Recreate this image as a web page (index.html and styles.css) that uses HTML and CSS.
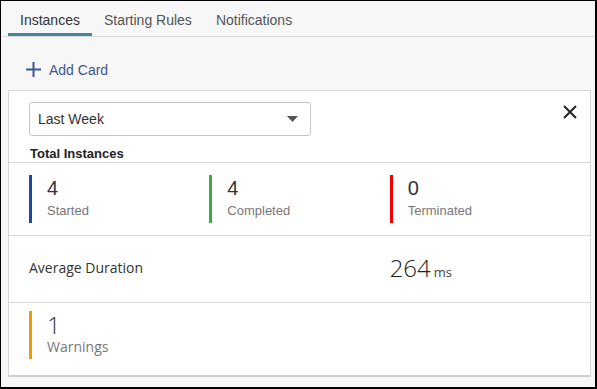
FILE: index.html
```html
<!DOCTYPE html>
<html lang="en">
<head>
  <meta charset="UTF-8">
  <title>Instances</title>
  <link rel="stylesheet" href="styles.css">
</head>
<body>
  <div class="frame">
    <div class="tabs">
      <div class="tab active">Instances</div>
      <div class="tab">Starting Rules</div>
      <div class="tab">Notifications</div>
    </div>

    <div class="add-card">
      <svg width="15" height="15" viewBox="0 0 15 15"><path d="M7.5 0v15M0 7.5h15" stroke="#3d5a8e" stroke-width="2"/></svg>
      <span>Add Card</span>
    </div>

    <div class="card">
      <div class="card-head">
        <div class="select">
          <span>Last Week</span>
          <svg width="11" height="6" viewBox="0 0 11 6"><path d="M0 0h11L5.5 6z" fill="#555"/></svg>
        </div>
        <svg class="close" width="14" height="14" viewBox="0 0 14 14"><path d="M1 1l12 12M13 1L1 13" stroke="#222" stroke-width="2"/></svg>
      </div>
      <div class="card-title">Total Instances</div>

      <div class="stats">
        <div class="stat blue">
          <div class="num">4</div>
          <div class="lbl">Started</div>
        </div>
        <div class="stat green">
          <div class="num">4</div>
          <div class="lbl">Completed</div>
        </div>
        <div class="stat red">
          <div class="num">0</div>
          <div class="lbl">Terminated</div>
        </div>
      </div>

      <div class="duration">
        <div class="dur-label">Average Duration</div>
        <div class="dur-value">264<span>ms</span></div>
      </div>

      <div class="warnings">
        <div class="stat orange">
          <div class="num">1</div>
          <div class="lbl">Warnings</div>
        </div>
      </div>
    </div>
  </div>
</body>
</html>
```

FILE: styles.css
```css
/* Instances card */
body {
  margin: 0;
  font-family: "Liberation Sans", Arial, sans-serif;
  color: #333;
}
.frame {
  width: 597px;
  height: 389px;
  box-sizing: border-box;
  border-style: solid;
  border-color: #000;
  border-width: 1px 2px 2px 1px;
  background-color: #f7f7f7;
  padding: 0 4px 0 7px;
}
.tabs {
  display: flex;
  height: 35px;
  border-bottom: 1px solid #d9d9d9;
  margin: 0 -4px 0 -7px;
  padding-left: 7px;
}
.tab {
  padding: 11px 12px 0;
  font-size: 14px;
  color: #555;
  box-sizing: border-box;
}
.tab.active {
  color: #333;
  border-bottom: 3px solid #3f8b9b;
}
.add-card {
  display: flex;
  align-items: center;
  height: 53px;
  box-sizing: border-box;
  padding: 25px 0 13px 18px;
  color: #3d5a8e;
  font-size: 14px;
}
.add-card span {
  margin-left: 8px;
}
.card {
  background-color: #fff;
  border: 1px solid #d6d6d6;
  border-bottom: 2px solid #cfcfcf;
}
.card-head {
  display: flex;
  justify-content: space-between;
  padding: 11px 13px 0 20px;
}
.select {
  width: 282px;
  height: 34px;
  box-sizing: border-box;
  border: 1px solid #c4c4c4;
  border-radius: 3px;
  display: flex;
  align-items: center;
  justify-content: space-between;
  padding: 0 12px 0 8px;
  font-size: 14px;
  color: #333;
}
.close {
  margin-top: 3px;
}
.card-title {
  font-size: 13px;
  font-weight: bold;
  color: #222;
  line-height: 14px;
  padding: 11px 0 1px 21px;
  border-bottom: 1px solid #d9d9d9;
}
.stats {
  display: grid;
  grid-template-columns: repeat(3, 1fr);
  padding: 12px 20px;
  border-bottom: 1px solid #d9d9d9;
}
.stat {
  border-left: 3px solid;
  height: 48px;
  padding-left: 15px;
}
.stat.blue { border-color: #1f48a0; }
.stat.green { border-color: #3daa47; }
.stat.red { border-color: #f00000; }
.stat.orange { border-color: #ee9a00; }
.num {
  font-size: 20px;
  line-height: 27px;
  color: #333;
}
.lbl {
  font-size: 13px;
  color: #777;
  line-height: 18px;
}
.duration {
  display: grid;
  grid-template-columns: 2fr 1fr;
  align-items: center;
  height: 67px;
  box-sizing: border-box;
  padding: 0 20px 4px;
  border-bottom: 1px solid #d9d9d9;
  font-family: "Open Sans", sans-serif;
}
.dur-label {
  font-size: 14px;
  color: #333;
}
.dur-value {
  font-size: 24px;
  font-weight: 300;
  color: #222;
}
.dur-value span {
  font-size: 13px;
  font-weight: 400;
  margin-left: 3px;
  color: #444;
}
.warnings {
  padding: 8px 20px 16px;
  font-family: "Open Sans", sans-serif;
}
.warnings .num {
  font-size: 24px;
  font-weight: 300;
  line-height: 27px;
}
.warnings .lbl {
  font-size: 14px;
  line-height: 18px;
}
```
